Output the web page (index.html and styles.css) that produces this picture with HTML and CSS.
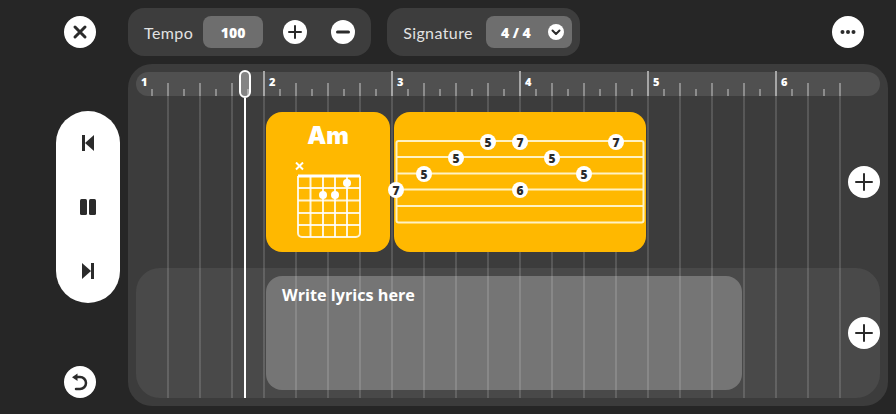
FILE: index.html
```html
<!DOCTYPE html>
<html>

<head>
    <meta charset="UTF-8">
    <meta name="viewport" content="width=device-width, initial-scale=1.0">
    <title>Song Editor</title>
    <link rel="stylesheet" href="styles.css">
</head>

<body>
    <aside class="side">
        <button class="round">
            <svg width="32" height="32" viewBox="0 0 32 32"><path class="ico thick" d="M11 11l10 10M21 11L11 21"/></svg>
        </button>

        <div class="transport">
            <svg width="20" height="20" viewBox="0 0 20 20"><path class="solid" d="M4 2h3v16H4zM16 2v16L7 10z"/></svg>
            <svg width="20" height="20" viewBox="0 0 20 20"><rect class="solid" x="2" y="2" width="7" height="16" rx="1.5"/><rect class="solid" x="11" y="2" width="7" height="16" rx="1.5"/></svg>
            <svg width="20" height="20" viewBox="0 0 20 20"><path class="solid" d="M13 2h3v16h-3zM4 2v16l9-8z"/></svg>
        </div>

        <button class="round">
            <svg width="32" height="32" viewBox="0 0 32 32"><path class="ico medium" d="M13 11h3a6 6 0 0 1 0 12h-4"/><path class="solid" d="M13.500 7.500v7.500L8 11.200z"/></svg>
        </button>
    </aside>

    <main class="main">
        <header class="topbar">
            <div class="panel tempo">
                <span class="panel-label">Tempo</span>
                <span class="pill tempo-value">100</span>
                <button class="round small">
                    <svg width="24" height="24" viewBox="0 0 24 24"><path class="ico" d="M12 6v12M6 12h12"/></svg>
                </button>
                <button class="round small">
                    <svg width="24" height="24" viewBox="0 0 24 24"><path class="ico thick" d="M6.500 12h11"/></svg>
                </button>
            </div>

            <div class="panel signature">
                <span class="panel-label">Signature</span>
                <span class="pill sig-value">
                    4 / 4
                    <svg width="16" height="16" viewBox="0 0 16 16"><circle cx="8" cy="8" r="8" fill="#fff"/><path class="ico" d="M4.500 6.500L8 10l3.500-3.500"/></svg>
                </span>
            </div>

            <button class="round more">
                <svg width="32" height="32" viewBox="0 0 32 32"><circle class="solid" cx="10.500" cy="16" r="2"/><circle class="solid" cx="16" cy="16" r="2"/><circle class="solid" cx="21.500" cy="16" r="2"/></svg>
            </button>
        </header>

        <section class="timeline">
            <div class="ruler">
                <div class="bar">1</div>
                <div class="bar">2</div>
                <div class="bar">3</div>
                <div class="bar">4</div>
                <div class="bar">5</div>
                <div class="bar">6</div>
            </div>

            <div class="gridlines"></div>

            <div class="track">
                <div class="card chord">
                    <div class="chord-name">Am</div>
                    <svg class="chord-box" width="68" height="80" viewBox="0 0 68 80">
                        <path class="cross" d="M1 .5l7 7M8 .5l-7 7"/>
                        <path class="fret top" d="M3 14h62"/>
                        <path class="fret" d="M3 26h62M3 38.500h62M3 51h62M3 63h62"/>
                        <path class="fret" d="M15.500 14v61M28 14v61M40 14v61M52 14v61"/>
                        <path class="fret" d="M3 14v57a4 4 0 0 0 4 4h54a4 4 0 0 0 4-4V14"/>
                        <circle cx="28" cy="33" r="4" fill="#fff"/>
                        <circle cx="40" cy="33" r="4" fill="#fff"/>
                        <circle cx="52" cy="21" r="4" fill="#fff"/>
                    </svg>
                </div>

                <div class="card tab">
                    <svg width="252" height="140" viewBox="0 0 252 140">
                        <rect class="string" x="2.500" y="29" width="247" height="81.500" rx="2"/>
                        <path class="string" d="M2.500 45h247M2.500 61.500h247M2.500 77.500h247M2.500 94h247"/>
                        <g class="note"><circle cx="94" cy="30" r="8"/><text x="94" y="34.500">5</text></g>
                        <g class="note"><circle cx="126" cy="30" r="8"/><text x="126" y="34.500">7</text></g>
                        <g class="note"><circle cx="222" cy="30" r="8"/><text x="222" y="34.500">7</text></g>
                        <g class="note"><circle cx="62" cy="46" r="8"/><text x="62" y="50.500">5</text></g>
                        <g class="note"><circle cx="158" cy="46" r="8"/><text x="158" y="50.500">5</text></g>
                        <g class="note"><circle cx="30" cy="62" r="8"/><text x="30" y="66.500">5</text></g>
                        <g class="note"><circle cx="190" cy="62" r="8"/><text x="190" y="66.500">5</text></g>
                        <g class="note"><circle cx="2" cy="78" r="8"/><text x="2" y="82.500">7</text></g>
                        <g class="note"><circle cx="126" cy="78" r="8"/><text x="126" y="82.500">6</text></g>
                    </svg>
                </div>

                <button class="round add">
                    <svg width="32" height="32" viewBox="0 0 32 32"><path class="ico" d="M16 8v16M8 16h16"/></svg>
                </button>
            </div>

            <div class="track lyrics-row">
                <div class="lyrics"><span>Write lyrics here</span></div>

                <button class="round add">
                    <svg width="32" height="32" viewBox="0 0 32 32"><path class="ico" d="M16 8v16M8 16h16"/></svg>
                </button>
            </div>

            <div class="playhead"></div>
        </section>
    </main>
</body>

</html>
```

FILE: styles.css
```css
* {
  box-sizing: border-box;
}

body {
  margin: 0;
  width: 896px;
  height: 414px;
  overflow: hidden;
  display: flex;
  background-color: #262626;
  color: #fff;
  font-family: Lato, "Liberation Sans", sans-serif;
}

svg {
  display: block;
}

/* icons */
.ico {
  fill: none;
  stroke: #2b2b2b;
  stroke-width: 2;
  stroke-linecap: round;
  stroke-linejoin: round;
}

.ico.medium {
  stroke-width: 2.5;
}

.ico.thick {
  stroke-width: 3;
}

.solid {
  fill: #2b2b2b;
}

.round {
  width: 32px;
  height: 32px;
  padding: 0;
  border: none;
  border-radius: 50%;
  background-color: #fff;
  flex-shrink: 0;
}

.round.small {
  width: 24px;
  height: 24px;
}

/* left column */
.side {
  width: 128px;
  padding: 16px 0 16px 32px;
  display: flex;
  flex-direction: column;
  align-items: center;
  justify-content: space-between;
}

.transport {
  width: 64px;
  height: 192px;
  padding: 22px 0;
  margin-left: 16px;
  border-radius: 32px;
  background-color: #fff;
  display: flex;
  flex-direction: column;
  align-items: center;
  justify-content: space-between;
}

/* top bar */
.main {
  width: 768px;
  padding: 8px 8px 8px 0;
  display: flex;
  flex-direction: column;
  gap: 8px;
}

.topbar {
  height: 48px;
  display: flex;
  align-items: center;
  gap: 16px;
}

.panel {
  height: 48px;
  padding: 0 16px;
  border-radius: 16px;
  background-color: #3d3d3d;
  display: flex;
  align-items: center;
}

.panel.signature {
  padding-right: 8px;
}

.panel-label {
  font-size: 16px;
  color: #e2e2e2;
  letter-spacing: 0.4px;
}

.pill {
  height: 32px;
  margin-left: 10px;
  border-radius: 8px;
  background-color: #6e6e6e;
  font-family: "Open Sans", sans-serif;
  font-size: 14px;
  font-weight: 800;
  display: flex;
  align-items: center;
}

.tempo-value {
  width: 60px;
  justify-content: center;
  margin-right: 20px;
}

.tempo .round + .round {
  margin-left: 24px;
}

.sig-value {
  width: 86px;
  margin-left: 13px;
  padding: 0 8px 0 15px;
  justify-content: space-between;
}

.more {
  margin-left: auto;
  margin-right: 24px;
}

/* timeline */
.timeline {
  position: relative;
  height: 342px;
  padding: 8px;
  border-radius: 24px;
  background-color: #3c3c3c;
}

.ruler {
  height: 24px;
  border-radius: 12px;
  display: grid;
  grid-template-columns: repeat(5, 128px) 104px;
  background:
    repeating-linear-gradient(90deg, transparent 0 15px, #8c8c8c 15px 17px, transparent 17px 32px) 16px 100% / 690px 13px no-repeat,
    repeating-linear-gradient(90deg, transparent 0 15px, #8c8c8c 15px 17px, transparent 17px 32px) 0 100% / 706px 7px no-repeat,
    #505050;
}

.bar {
  position: relative;
  padding: 3px 0 0 5px;
  font-family: "Open Sans", sans-serif;
  font-size: 11px;
  line-height: 13px;
  font-weight: 800;
}

.bar + .bar::before {
  content: "";
  position: absolute;
  left: -1px;
  top: -1px;
  bottom: 0;
  width: 2px;
  background-color: #a6a6a6;
}

.gridlines {
  position: absolute;
  left: 24px;
  top: 32px;
  width: 690px;
  bottom: 8px;
  background: repeating-linear-gradient(90deg, transparent 0 15px, rgba(255, 255, 255, 0.14) 15px 17px, transparent 17px 32px);
}

.track {
  height: 140px;
  margin-top: 16px;
  padding-left: 130px;
  display: flex;
  align-items: center;
  gap: 4px;
}

.add {
  margin-left: auto;
  position: relative;
  z-index: 2;
}

.card {
  position: relative;
  z-index: 1;
  height: 140px;
  border-radius: 16px;
  background-color: #ffb800;
}

.chord {
  width: 124px;
  padding-top: 8px;
  display: flex;
  flex-direction: column;
  align-items: center;
}

.chord-name {
  height: 42px;
  font-family: Inter, sans-serif;
  font-size: 24px;
  line-height: 32px;
  font-weight: 900;
}

.chord-box {
  margin-left: 2px;
}

.cross {
  fill: none;
  stroke: #fff;
  stroke-width: 2;
}

.fret {
  fill: none;
  stroke: rgba(255, 255, 255, 0.85);
  stroke-width: 2;
}

.fret.top {
  stroke: #fff;
  stroke-width: 3;
}

.tab {
  width: 252px;
}

.tab svg {
  overflow: visible;
}

.string {
  fill: none;
  stroke: #fff2c4;
  stroke-width: 2;
}

.note circle {
  fill: #fff;
}

.note text {
  fill: #2b2b2b;
  font-family: "Open Sans", sans-serif;
  font-size: 12px;
  font-weight: 800;
  text-anchor: middle;
}

.lyrics-row {
  height: 130px;
  padding: 8px 0 8px 130px;
  border-radius: 24px;
  background-color: #494949;
}

.lyrics {
  width: 476px;
  height: 114px;
  padding: 7px 16px;
  border-radius: 16px;
  background-color: #757575;
  font-family: "Open Sans", sans-serif;
  font-size: 16.2px;
  line-height: 24px;
  font-weight: 700;
}

.lyrics span {
  position: relative;
  z-index: 1;
}

.playhead {
  position: absolute;
  left: 111px;
  top: 6px;
  width: 12px;
  height: 28px;
  border: 2px solid #fff;
  border-radius: 6px;
  background-color: rgba(255, 255, 255, 0.3);
  z-index: 3;
}

.playhead::after {
  content: "";
  position: absolute;
  left: 3px;
  top: 26px;
  width: 2px;
  height: 300px;
  background-color: #fff;
}
```
